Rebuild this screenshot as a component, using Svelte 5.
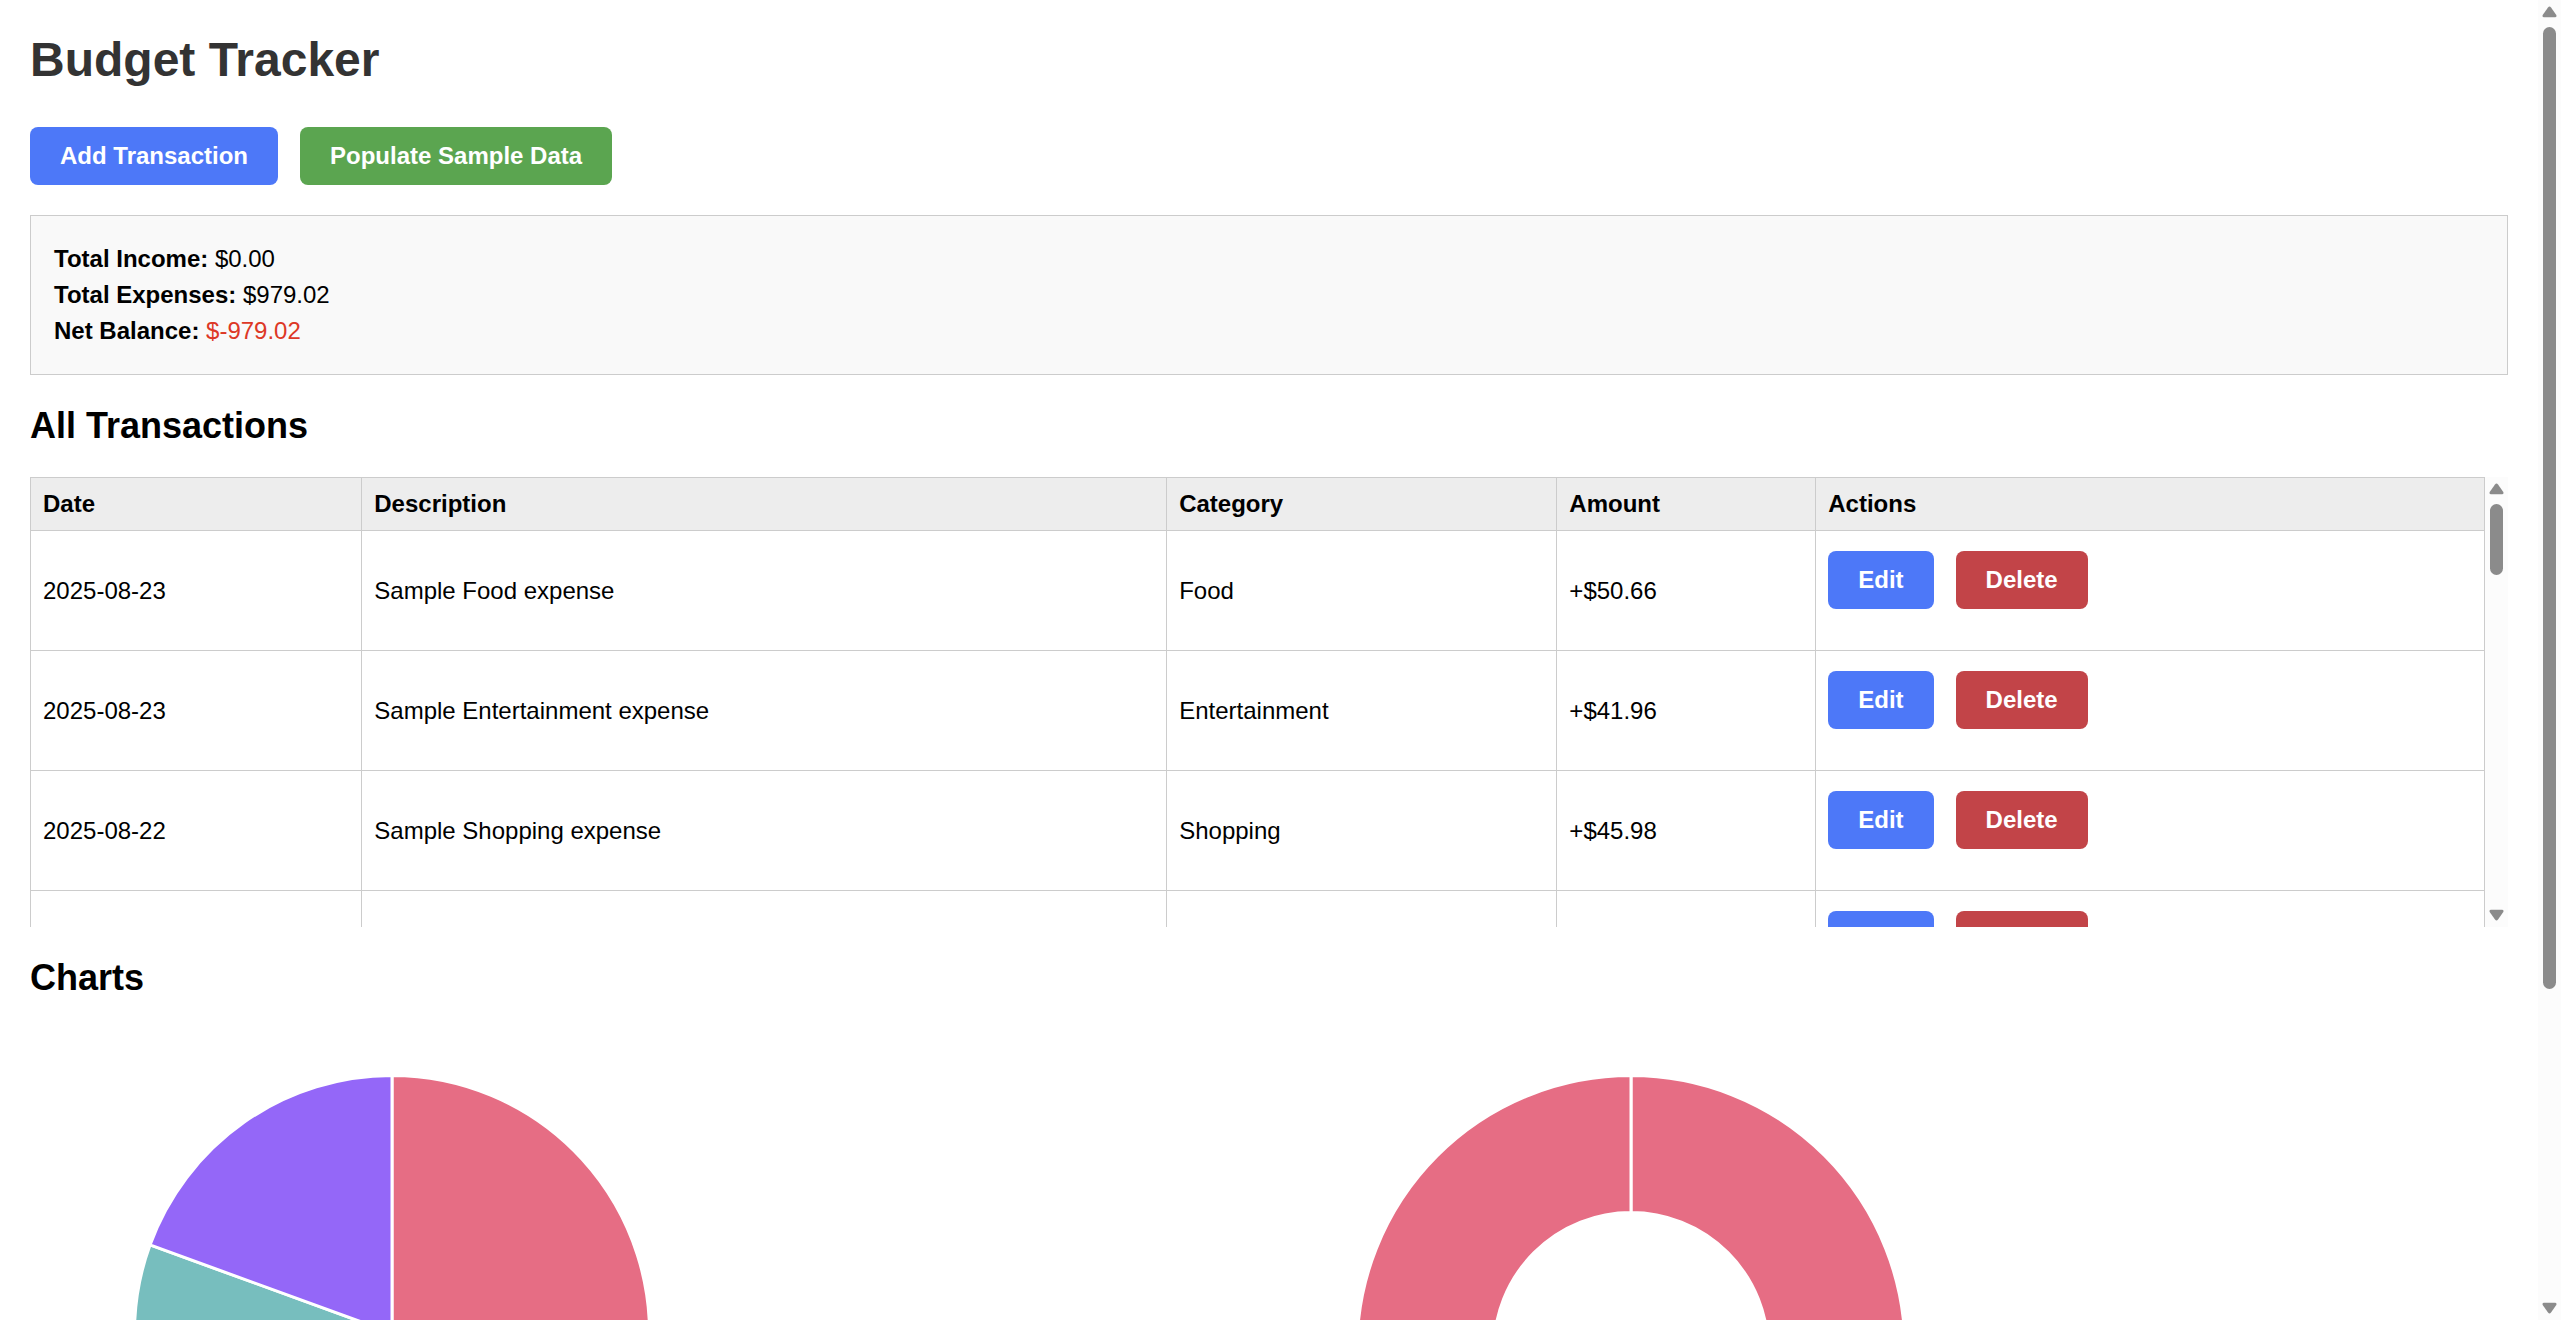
<script>
  const money = (n) => n.toFixed(2);

  const transactions = [
    { date: '2025-08-23', category: 'Food', amount: 50.66 },
    { date: '2025-08-23', category: 'Entertainment', amount: 41.96 },
    { date: '2025-08-22', category: 'Shopping', amount: 45.98 },
    { date: '2025-08-22', category: 'Transport', amount: 38.4 }
  ];

  const income = 0;
  const expenses = 979.02;

  // Point on a circle, with the angle in degrees clockwise from twelve o'clock.
  function point(cx, cy, r, angle) {
    const a = ((angle - 90) * Math.PI) / 180;
    return `${cx + r * Math.cos(a)} ${cy + r * Math.sin(a)}`;
  }

  function slice(cx, cy, outer, inner, from, to) {
    const large = to - from > 180 ? 1 : 0;
    const start = `M${point(cx, cy, outer, from)}A${outer} ${outer} 0 ${large} 1 ${point(cx, cy, outer, to)}`;
    if (!inner) return `${start}L${cx} ${cy}Z`;
    return `${start}L${point(cx, cy, inner, to)}A${inner} ${inner} 0 ${large} 0 ${point(cx, cy, inner, from)}Z`;
  }

  const pie = [
    { from: 0, to: 190, color: '#e66d84' },
    { from: 190, to: 290, color: '#77bebe' },
    { from: 290, to: 360, color: '#9467f8' }
  ];

  const doughnut = [
    { from: 0, to: 180, color: '#e66d84' },
    { from: 180, to: 360, color: '#e66d84' }
  ];
</script>

{#snippet arrow(down)}
  <svg class="arrow" class:down viewBox="0 0 15 12" width="15" height="12">
    <path d="M6 1.4Q7.500-.4 9 1.400L14.300 9Q15 11.200 13 11.300H2Q0 11.200 .700 9Z" fill="#8b8b8b" />
  </svg>
{/snippet}

<div class="shell">
  <main>
    <h1>Budget Tracker</h1>

    <div class="toolbar">
      <button type="button">Add Transaction</button>
      <button type="button" class="green">Populate Sample Data</button>
    </div>

    <section class="summary">
      <p><strong>Total Income:</strong> ${money(income)}</p>
      <p><strong>Total Expenses:</strong> ${money(expenses)}</p>
      <p><strong>Net Balance:</strong> <span class="negative">${money(income - expenses)}</span></p>
    </section>

    <h2>All Transactions</h2>
    <div class="list">
      <div class="scroller">
        <table>
          <colgroup>
            <col class="date" /><col class="description" /><col class="category" /><col class="amount" /><col />
          </colgroup>
          <thead>
            <tr>
              <th>Date</th>
              <th>Description</th>
              <th>Category</th>
              <th>Amount</th>
              <th>Actions</th>
            </tr>
          </thead>
          <tbody>
            {#each transactions as t}
              <tr>
                <td>{t.date}</td>
                <td>Sample {t.category} expense</td>
                <td>{t.category}</td>
                <td>+${money(t.amount)}</td>
                <td>
                  <div class="actions">
                    <button type="button">Edit</button>
                    <button type="button" class="red">Delete</button>
                  </div>
                </td>
              </tr>
            {/each}
          </tbody>
        </table>
      </div>
      <div class="scrollbar" aria-hidden="true">
        {@render arrow(false)}
        <div class="track"><div class="thumb list-thumb"></div></div>
        {@render arrow(true)}
      </div>
    </div>

    <h2>Charts</h2>
    <section class="charts">
      <svg viewBox="0 0 724 640" width="724" height="640" role="img" aria-label="Expenses by category">
        {#each pie as s}
          <path d={slice(362, 304, 257.5, 0, s.from, s.to)} fill={s.color} />
        {/each}
      </svg>
      <svg viewBox="0 0 724 640" width="724" height="640" role="img" aria-label="Income and expenses">
        {#each doughnut as s}
          <path d={slice(362, 320.5, 274, 137, s.from, s.to)} fill={s.color} />
        {/each}
      </svg>
    </section>
  </main>

  <div class="scrollbar" aria-hidden="true">
    {@render arrow(false)}
    <div class="track"><div class="thumb page-thumb"></div></div>
    {@render arrow(true)}
  </div>
</div>

<style>
  :global(body) {
    margin: 0;
    background: #fff;
  }

  .shell {
    display: flex;
    height: 100vh;
    overflow: hidden;
    font: 24px/28px 'Liberation Sans', Arial, sans-serif;
    color: #000;
  }

  main {
    flex: 1;
    min-width: 0;
    padding: 32px 30px 30px;
    overflow-y: auto;
    scrollbar-width: none;
  }

  h1 {
    margin: 0 0 39px;
    font-size: 48px;
    line-height: 56px;
    color: #333;
  }

  h2 {
    margin: 30px 0;
    font-size: 36px;
    line-height: 42px;
  }

  button {
    height: 58px;
    padding: 0 30px;
    border: 0;
    border-radius: 8px;
    background: #4d78f8;
    color: #fff;
    font: inherit;
    font-weight: bold;
    cursor: pointer;
  }

  .green {
    background: #5ba550;
  }

  .red {
    background: #c24448;
  }

  .toolbar,
  .actions {
    display: flex;
    gap: 22px;
  }

  .toolbar {
    margin-bottom: 30px;
  }

  .summary {
    padding: 25px 23px;
    border: 1px solid #ccc;
    background: #f9f9f9;
  }

  .summary p {
    margin: 0;
    line-height: 36px;
  }

  .negative {
    color: #dd3826;
  }

  .list {
    display: flex;
    height: 450px;
  }

  .scroller {
    flex: 1;
    min-width: 0;
    overflow-y: auto;
    scrollbar-width: none;
  }

  table {
    width: 100%;
    table-layout: fixed;
    border-collapse: collapse;
  }

  .date {
    width: 13.5%;
  }

  .description {
    width: 32.8%;
  }

  .category {
    width: 15.9%;
  }

  .amount {
    width: 10.55%;
  }

  th,
  td {
    padding: 12px;
    border: 1px solid #ccc;
    text-align: left;
  }

  th {
    background: #ededed;
  }

  td {
    padding: 0 12px;
  }

  .actions {
    padding: 20px 0 41px;
  }

  .charts {
    display: grid;
    grid-template-columns: 1fr 1fr;
  }

  .charts svg {
    max-width: 100%;
  }

  .charts path {
    stroke: #fff;
    stroke-width: 3px;
    stroke-linejoin: bevel;
  }

  .scrollbar {
    display: flex;
    flex: none;
    flex-direction: column;
    align-items: center;
    gap: 9px;
    box-sizing: border-box;
    width: 23px;
    padding: 6px 0;
    background: #fcfcfc;
  }

  .arrow {
    display: block;
    flex: none;
  }

  .down {
    transform: rotate(180deg);
  }

  .track {
    flex: 1;
  }

  .thumb {
    width: 13px;
    border-radius: 7px;
    background: #8b8b8b;
  }

  .list-thumb {
    height: 18%;
  }

  .page-thumb {
    height: 76%;
  }
</style>
